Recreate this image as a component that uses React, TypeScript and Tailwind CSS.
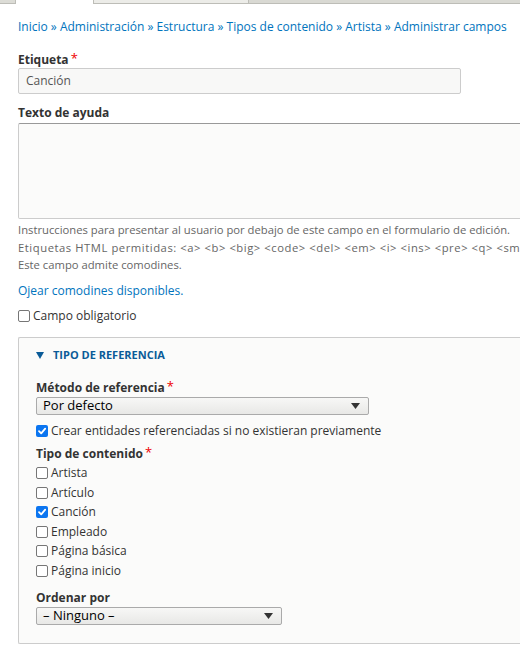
import React from "react";

const Star = () => <span className="text-[#e00] ml-[2px] text-[13px] font-normal align-top leading-none">*</span>;

function Check({ checked, label }: { checked?: boolean; label: string }) {
  return (
    <label className="flex items-center h-[19.5px] text-[12px] text-[#333]">
      {checked ? (
        <span className="w-[12px] h-[12px] rounded-[2px] bg-[#0b75f0] flex items-center justify-center mr-[3px]">
          <svg width="10" height="10" viewBox="0 0 10 10"><path d="M2 5.2 L4.2 7.4 L8.2 2.6" stroke="white" strokeWidth="1.8" fill="none" strokeLinecap="round" strokeLinejoin="round" /></svg>
        </span>
      ) : (
        <span className="w-[12px] h-[12px] rounded-[2px] border border-[#767676] bg-white mr-[3px]" />
      )}
      <span>{label}</span>
    </label>
  );
}

function Select({ value, w }: { value: string; w: string }) {
  return (
    <div className={`${w} h-[18px] border border-[#aaa] rounded-[2px] bg-[linear-gradient(#f7f7f6,#e8e8e6)] flex items-center justify-between pl-[6px] pr-[8px] text-[13px] text-black`}>
      <span>{value}</span>
      <svg width="9" height="6" viewBox="0 0 9 6"><path d="M0 0 H9 L4.5 6 Z" fill="#333" /></svg>
    </div>
  );
}

export default function App() {
  return (
    <div className="w-[520px] h-[650px] overflow-hidden bg-white text-[#333]" style={{ fontFamily: '"Open Sans", sans-serif' }}>
      <div className="flex h-[4px]">
        <div className="w-[16px] bg-[#dcdcd6] border-r border-b border-[#bdbdb7]" />
        <div className="w-[77px] bg-white" />
        <div className="w-[155px] bg-[#ecece8] border-l border-b border-[#bdbdb7]" />
        <div className="flex-1 bg-[#d9d9d3] border-l border-b border-[#bdbdb7]" />
      </div>
      <div className="pl-[18px]">
        <div className="mt-[14px] text-[12px] text-[#0074bd] whitespace-nowrap leading-[18px]">
          Inicio » Administración » Estructura » Tipos de contenido » Artista » Administrar campos
        </div>
        <div className="mt-[16px] text-[12px] font-bold text-[#333] leading-[16px]">Etiqueta<Star /></div>
        <div className="mt-0 w-[443px] h-[26px] border border-[#ccc] rounded-[2px] bg-[#f8f8f7] flex items-center pl-[7px] text-[12px] text-[#555]">Canción</div>
        <div className="mt-[11px] text-[12px] font-bold leading-[16px]">Texto de ayuda</div>
        <div className="mt-[2px] h-[96px] border border-[#ccc] border-t-[#999] rounded-l-[2px] bg-[#fbfbfa] -mr-[2px]" />
        <div className="mt-[2px] text-[11.25px] text-[#666] leading-[17.5px] whitespace-nowrap overflow-hidden">
          <div>Instrucciones para presentar al usuario por debajo de este campo en el formulario de edición.</div>
          <div className="tracking-[0.55px]">Etiquetas HTML permitidas: &lt;a&gt; &lt;b&gt; &lt;big&gt; &lt;code&gt; &lt;del&gt; &lt;em&gt; &lt;i&gt; &lt;ins&gt; &lt;pre&gt; &lt;q&gt; &lt;small&gt;</div>
          <div>Este campo admite comodines.</div>
        </div>
        <div className="mt-[8px] text-[12px] text-[#0074bd] leading-[18px]">Ojear comodines disponibles.</div>
        <div className="mt-[7px]"><Check label="Campo obligatorio" /></div>
        <div className="mt-[11px] border border-[#ccc] border-r-0 rounded-l-[2px] bg-[#fbfbfa] pl-[17px] pb-[18px]">
          <div className="mt-[8px] flex items-center text-[11px] font-bold text-[#0a5b98] leading-[18px]">
            <svg width="8" height="7" viewBox="0 0 8 7" className="mr-[9px]"><path d="M0 0 H8 L4 7 Z" fill="#0a5b98" /></svg>
            TIPO DE REFERENCIA
          </div>
          <div className="mt-[16px] text-[12px] font-bold leading-[16px]">Método de referencia<Star /></div>
          <div className="mt-[1px]"><Select value="Por defecto" w="w-[333px]" /></div>
          <div className="mt-[6px]"><Check checked label="Crear entidades referenciadas si no existieran previamente" /></div>
          <div className="mt-[5px] text-[12px] font-bold leading-[16px]">Tipo de contenido<Star /></div>
          <div className="mt-[2px]">
            <Check label="Artista" />
            <Check label="Artículo" />
            <Check checked label="Canción" />
            <Check label="Empleado" />
            <Check label="Página básica" />
            <Check label="Página inicio" />
          </div>
          <div className="mt-[9px] text-[12px] font-bold leading-[16px]">Ordenar por</div>
          <div className="mt-[1px]"><Select value="– Ninguno –" w="w-[246px]" /></div>
        </div>
      </div>
    </div>
  );
}
